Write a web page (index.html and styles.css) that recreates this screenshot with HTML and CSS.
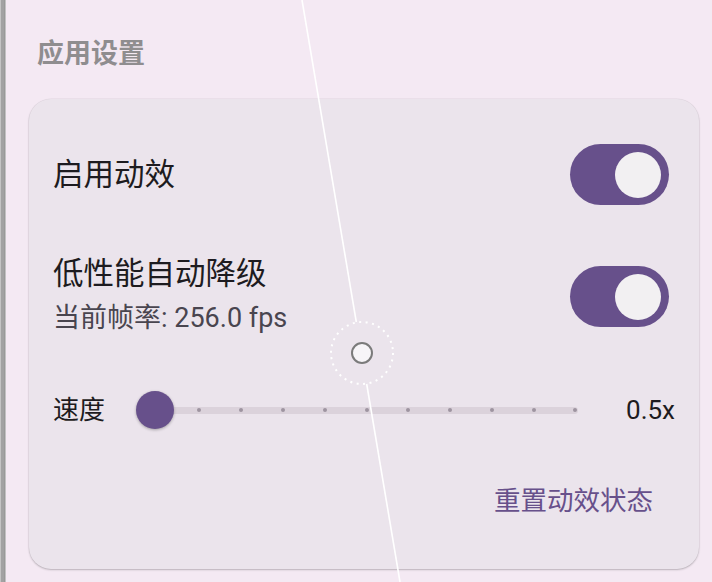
FILE: index.html
```html
<!DOCTYPE html>
<html lang="zh-CN">
<head>
<meta charset="utf-8">
<title>应用设置</title>
<link rel="stylesheet" href="styles.css">
</head>
<body>
<div class="app">
  <div class="edge"></div>
  <main class="content">
    <h2 class="section-title">应用设置</h2>
    <section class="card">
      <div class="row row-simple">
        <span class="label">启用动效</span>
        <span class="switch on"><span class="switch-thumb"></span></span>
      </div>
      <div class="row row-double">
        <div class="text">
          <div class="label">低性能自动降级</div>
          <div class="sub">当前帧率: 256.0 fps</div>
        </div>
        <span class="switch on"><span class="switch-thumb"></span></span>
      </div>
      <div class="slider-row">
        <span class="slider-label">速度</span>
        <div class="slider">
          <div class="track">
            <span class="tick"></span><span class="tick"></span><span class="tick"></span><span class="tick"></span><span class="tick"></span><span class="tick"></span><span class="tick"></span><span class="tick"></span><span class="tick"></span><span class="tick"></span><span class="tick"></span>
          </div>
          <span class="slider-thumb"></span>
        </div>
        <span class="slider-value">0.5x</span>
      </div>
      <div class="actions">
        <button class="text-button">重置动效状态</button>
      </div>
    </section>
  </main>
  <svg class="overlay" width="712" height="582" viewBox="0 0 712 582">
    <line x1="302" y1="0" x2="356.3" y2="322" stroke="#ffffff" stroke-width="1.6"/>
    <line x1="366.7" y1="384" x2="400" y2="582" stroke="#ffffff" stroke-width="1.6"/>
    <circle cx="362" cy="353" r="31" fill="none" stroke="#ffffff" stroke-width="2" stroke-dasharray="2 4.5"/>
    <circle cx="362" cy="353" r="10" fill="#f7f5f8" stroke="#7b7b7b" stroke-width="2"/>
  </svg>
</div>
</body>
</html>
```
FILE: styles.css
```css
* { box-sizing: border-box; }

html, body {
  margin: 0;
  padding: 0;
  width: 712px;
  height: 582px;
  overflow: hidden;
  background: #f4e9f3;
  font-family: Roboto, "Noto Sans CJK SC", sans-serif;
}

.app {
  position: relative;
  display: flex;
  width: 712px;
  height: 582px;
}

.edge {
  width: 6px;
  flex: none;
  background: linear-gradient(to right, #c4c4c4 0, #c4c4c4 1px, #a2a2a2 1px, #a2a2a2 4px, #999 4px, #999 5px, #c2c2c2 5px);
}

.content {
  flex: 1;
  padding: 37px 13px 0 23px;
}

.section-title {
  margin: 0 0 0 8px;
  height: 34px;
  font-size: 27px;
  line-height: 34px;
  font-weight: 700;
  color: #8f8d8f;
}

.card {
  margin-top: 28px;
  background: #ebe4ec;
  border-radius: 22px;
  box-shadow: 0 1px 2px rgba(0,0,0,0.22), 0 0 0 0.5px rgba(0,0,0,0.06);
  padding: 45px 24px 44px 24px;
  height: 470px;
}

.row {
  display: flex;
  align-items: center;
  justify-content: space-between;
}

.row-simple { height: 61px; }

.row-double {
  margin-top: 54px;
  height: 74px;
}

.label {
  font-size: 30.5px;
  line-height: 36px;
  color: #1d1b20;
}

.row-double .label { line-height: 30px; }

.sub {
  margin-top: 14px;
  font-size: 27px;
  line-height: 30px;
  color: #49454f;
}

.switch {
  position: relative;
  display: block;
  width: 99px;
  height: 61px;
  margin-right: 6px;
  border-radius: 31px;
  background: #67508b;
}

.switch-thumb {
  position: absolute;
  top: 8px;
  right: 8px;
  width: 46px;
  height: 46px;
  border-radius: 50%;
  background: #f2f0f2;
}

.slider-row {
  margin-top: 53px;
  height: 48px;
  display: flex;
  align-items: center;
}

.slider-label {
  font-size: 26px;
  line-height: 32px;
  color: #1d1b20;
}

.slider {
  position: relative;
  flex: 1;
  height: 48px;
  margin-left: 31px;
  padding: 0 19px;
  display: flex;
  align-items: center;
}

.track {
  position: relative;
  width: 100%;
  height: 7px;
  border-radius: 4px;
  background: #dbd2db;
  display: flex;
  align-items: center;
  justify-content: space-between;
  padding: 0 0.5px;
}

.tick {
  width: 4px;
  height: 4px;
  border-radius: 50%;
  background: #9e94a0;
}

.slider-thumb {
  position: absolute;
  left: 0;
  top: 5px;
  width: 38px;
  height: 38px;
  border-radius: 50%;
  background: #67508b;
  box-shadow: 0 1px 3px rgba(0,0,0,0.3);
}

.slider-value {
  margin-left: 29px;
  font-size: 26px;
  line-height: 32px;
  color: #1d1b20;
}

.actions {
  margin-top: 43px;
  display: flex;
  justify-content: flex-end;
}

.text-button {
  height: 48px;
  padding: 0 22px;
  border: none;
  background: transparent;
  font-family: Roboto, "Noto Sans CJK SC", sans-serif;
  font-size: 26.5px;
  line-height: 48px;
  color: #67508b;
}

.overlay {
  position: absolute;
  left: 0;
  top: 0;
  pointer-events: none;
}
```
